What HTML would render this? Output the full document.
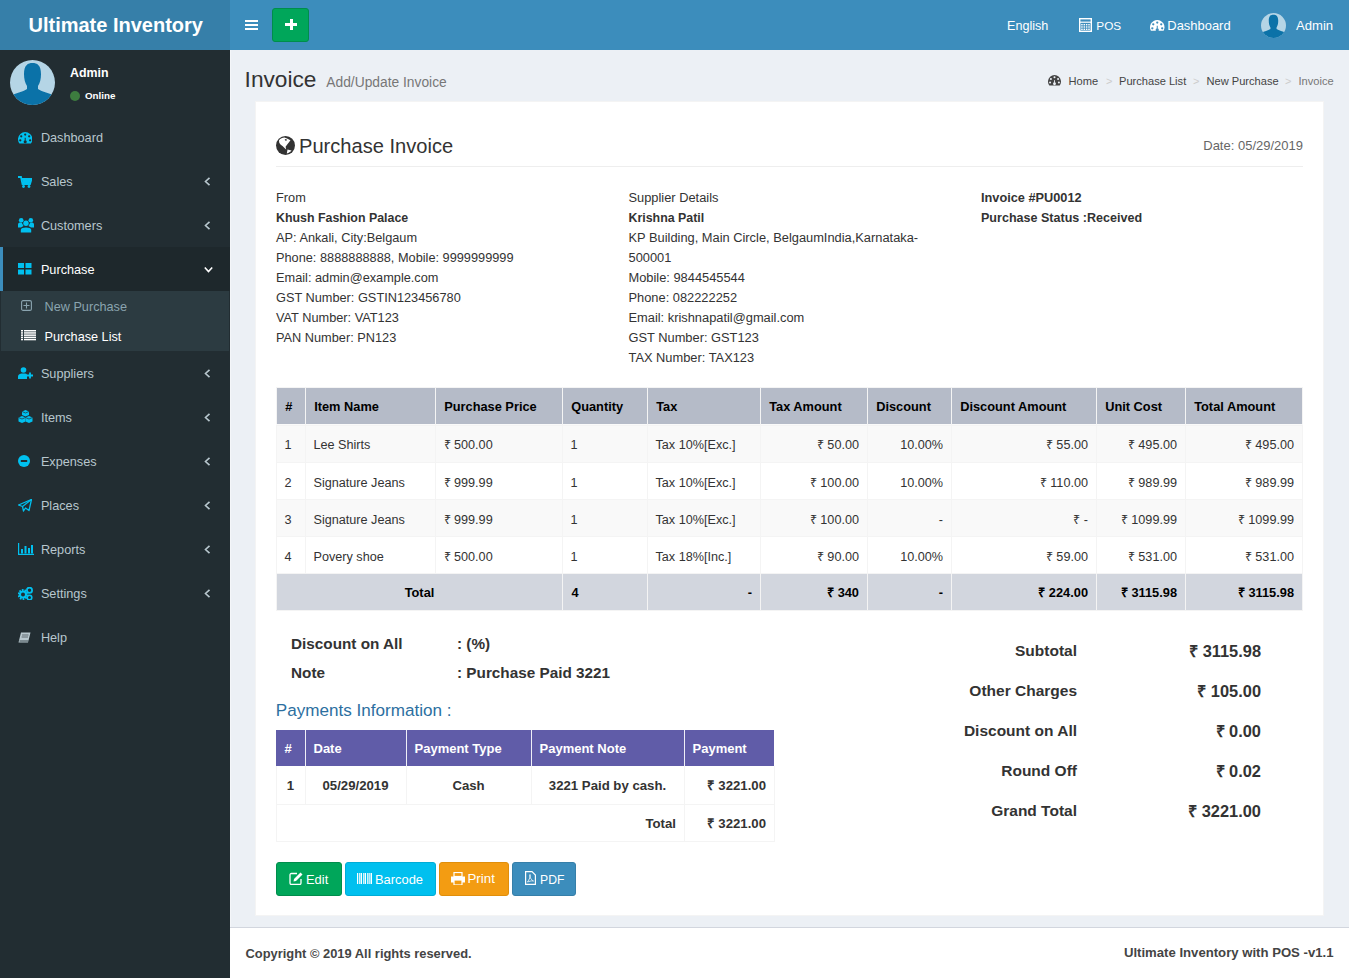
<!DOCTYPE html>
<html><head><meta charset="utf-8"><title>Invoice</title>
<style>
html,body{margin:0;padding:0;width:1349px;height:978px;overflow:hidden;background:#ecf0f5;}
body{position:relative;font-family:'Liberation Sans', sans-serif;}
.t{position:absolute;white-space:nowrap;line-height:20px;}
.r{position:absolute;}
</style></head><body>
<div class="r" style="left:0px;top:0px;width:230px;height:50px;background:#367fa9;"></div>
<div class="r" style="left:230px;top:0px;width:1119px;height:50px;background:#3c8dbc;"></div>
<div class="r" style="left:0px;top:50px;width:230px;height:928px;background:#222d32;"></div>
<div class="r" style="left:230px;top:50px;width:1119px;height:877px;background:#ecf0f5;"></div>
<div class="r" style="left:230px;top:50px;width:1px;height:877px;background:#f4f6f9;"></div>
<div class="r" style="left:230px;top:927px;width:1119px;height:1px;background:#d2d6de;"></div>
<div class="r" style="left:230px;top:928px;width:1119px;height:50px;background:#ffffff;"></div>
<div class="t" style="top:15.07px;font-size:20px;color:#fff;font-weight:bold;left:28.5px;">Ultimate Inventory</div>
<div class="r" style="left:245px;top:20px;width:13px;height:2px;background:#fff;"></div>
<div class="r" style="left:245px;top:24px;width:13px;height:2px;background:#fff;"></div>
<div class="r" style="left:245px;top:28px;width:13px;height:2px;background:#fff;"></div>
<div class="r" style="left:272px;top:8px;width:37px;height:34px;background:#00a65a;border-radius:3px;box-sizing:border-box;border:1px solid #008d4c;"></div>
<div class="r" style="left:285px;top:23px;width:12px;height:3px;background:#fff;"></div>
<div class="r" style="left:289.5px;top:19px;width:3px;height:11px;background:#fff;"></div>
<div class="t" style="top:15.63px;font-size:12.6px;color:#fff;left:1007px;">English</div>
<svg class="r" style="left:1079px;top:18px;" width="13" height="14" viewBox="0 0 13 14"><rect x="0.7" y="0.7" width="11.6" height="12.6" fill="none" stroke="#fff" stroke-width="1.4"/><rect x="0.7" y="3.6" width="11.6" height="1.2" fill="#fff"/><rect x="2.20" y="6.00" width="1.5" height="1.4" fill="#fff"/><rect x="2.20" y="8.30" width="1.5" height="1.4" fill="#fff"/><rect x="2.20" y="10.60" width="1.5" height="1.4" fill="#fff"/><rect x="4.55" y="6.00" width="1.5" height="1.4" fill="#fff"/><rect x="4.55" y="8.30" width="1.5" height="1.4" fill="#fff"/><rect x="4.55" y="10.60" width="1.5" height="1.4" fill="#fff"/><rect x="6.90" y="6.00" width="1.5" height="1.4" fill="#fff"/><rect x="6.90" y="8.30" width="1.5" height="1.4" fill="#fff"/><rect x="6.90" y="10.60" width="1.5" height="1.4" fill="#fff"/><rect x="9.25" y="6.00" width="1.5" height="1.4" fill="#fff"/><rect x="9.25" y="8.30" width="1.5" height="1.4" fill="#fff"/><rect x="9.25" y="10.60" width="1.5" height="1.4" fill="#fff"/></svg>
<div class="t" style="top:15.91px;font-size:11.8px;color:#fff;left:1096.3px;">POS</div>
<svg class="r" style="left:1150px;top:20px;" width="14.5" height="11" viewBox="0 0 14.5 11"><path d="M0.89,10.73 A7.25,7.25 0 1 1 13.61,10.73 Z" fill="#fff"/><circle cx="7.25" cy="2.54" r="1.14" fill="#3c8dbc"/><circle cx="3.26" cy="4.35" r="1.14" fill="#3c8dbc"/><circle cx="11.24" cy="4.35" r="1.14" fill="#3c8dbc"/><circle cx="2.32" cy="8.34" r="1.14" fill="#3c8dbc"/><circle cx="12.18" cy="8.34" r="1.14" fill="#3c8dbc"/><path d="M7.25,5.80 L7.25,8.70" stroke="#3c8dbc" stroke-width="1.03"/><circle cx="7.25" cy="9.79" r="1.60" fill="#3c8dbc"/></svg>
<div class="t" style="top:15.51px;font-size:12.95px;color:#fff;left:1167.3px;">Dashboard</div>
<svg class="r" style="left:1261px;top:13px;" width="25" height="25" viewBox="0 0 45 45"><defs><clipPath id="c1261"><circle cx="22.5" cy="22.5" r="22.5"/></clipPath></defs><circle cx="22.5" cy="22.5" r="22.5" fill="#b5d5e6"/><g clip-path="url(#c1261)" fill="#0b72a8"><path d="M14,14 C14,5 18,3 22.5,3 C27,3 31,5 31,14 C31,19 30,23 28,26 L28,29 C32,32 40,33 44,36 L46,46 L-1,46 L1,36 C5,33 13,32 17,29 L17,26 C15,23 14,19 14,14 Z"/></g></svg>
<div class="t" style="top:16.06px;font-size:13.1px;color:#fff;left:1296px;">Admin</div>
<svg class="r" style="left:10px;top:60px;" width="45" height="45" viewBox="0 0 45 45"><defs><clipPath id="c10"><circle cx="22.5" cy="22.5" r="22.5"/></clipPath></defs><circle cx="22.5" cy="22.5" r="22.5" fill="#b5d5e6"/><g clip-path="url(#c10)" fill="#0b72a8"><path d="M14,14 C14,5 18,3 22.5,3 C27,3 31,5 31,14 C31,19 30,23 28,26 L28,29 C32,32 40,33 44,36 L46,46 L-1,46 L1,36 C5,33 13,32 17,29 L17,26 C15,23 14,19 14,14 Z"/></g></svg>
<div class="t" style="top:62.70px;font-size:12.4px;color:#fff;font-weight:bold;left:70px;">Admin</div>
<svg class="r" style="left:70px;top:91px;" width="10" height="10" viewBox="0 0 10 10"><circle cx="5" cy="5" r="5" fill="#3d7c3f"/></svg>
<div class="t" style="top:86.40px;font-size:9.8px;color:#fff;font-weight:bold;left:85px;">Online</div>
<div class="r" style="left:0px;top:247px;width:230px;height:44px;background:#1e282c;"></div>
<div class="r" style="left:0px;top:247px;width:3px;height:44px;background:#3c8dbc;"></div>
<div class="r" style="left:1px;top:291px;width:228px;height:60px;background:#2c3b41;"></div>
<div class="t" style="top:127.60px;font-size:12.7px;color:#b8c7ce;left:40.9px;">Dashboard</div>
<div class="t" style="top:171.60px;font-size:12.7px;color:#b8c7ce;left:40.9px;">Sales</div>
<svg class="r" style="left:204px;top:177px;" width="7" height="9" viewBox="0 0 7 9"><path d="M5.5,0.8 L1.5,4.5 L5.5,8.2" fill="none" stroke="#b8c7ce" stroke-width="1.6"/></svg>
<div class="t" style="top:215.60px;font-size:12.7px;color:#b8c7ce;left:40.9px;">Customers</div>
<svg class="r" style="left:204px;top:221px;" width="7" height="9" viewBox="0 0 7 9"><path d="M5.5,0.8 L1.5,4.5 L5.5,8.2" fill="none" stroke="#b8c7ce" stroke-width="1.6"/></svg>
<div class="t" style="top:259.60px;font-size:12.7px;color:#fff;left:40.9px;">Purchase</div>
<svg class="r" style="left:204px;top:266px;" width="9" height="7" viewBox="0 0 9 7"><path d="M0.8,1.5 L4.5,5.5 L8.2,1.5" fill="none" stroke="#fff" stroke-width="1.6"/></svg>
<div class="t" style="top:363.60px;font-size:12.7px;color:#b8c7ce;left:40.9px;">Suppliers</div>
<svg class="r" style="left:204px;top:369px;" width="7" height="9" viewBox="0 0 7 9"><path d="M5.5,0.8 L1.5,4.5 L5.5,8.2" fill="none" stroke="#b8c7ce" stroke-width="1.6"/></svg>
<div class="t" style="top:407.60px;font-size:12.7px;color:#b8c7ce;left:40.9px;">Items</div>
<svg class="r" style="left:204px;top:413px;" width="7" height="9" viewBox="0 0 7 9"><path d="M5.5,0.8 L1.5,4.5 L5.5,8.2" fill="none" stroke="#b8c7ce" stroke-width="1.6"/></svg>
<div class="t" style="top:451.60px;font-size:12.7px;color:#b8c7ce;left:40.9px;">Expenses</div>
<svg class="r" style="left:204px;top:457px;" width="7" height="9" viewBox="0 0 7 9"><path d="M5.5,0.8 L1.5,4.5 L5.5,8.2" fill="none" stroke="#b8c7ce" stroke-width="1.6"/></svg>
<div class="t" style="top:495.60px;font-size:12.7px;color:#b8c7ce;left:40.9px;">Places</div>
<svg class="r" style="left:204px;top:501px;" width="7" height="9" viewBox="0 0 7 9"><path d="M5.5,0.8 L1.5,4.5 L5.5,8.2" fill="none" stroke="#b8c7ce" stroke-width="1.6"/></svg>
<div class="t" style="top:539.60px;font-size:12.7px;color:#b8c7ce;left:40.9px;">Reports</div>
<svg class="r" style="left:204px;top:545px;" width="7" height="9" viewBox="0 0 7 9"><path d="M5.5,0.8 L1.5,4.5 L5.5,8.2" fill="none" stroke="#b8c7ce" stroke-width="1.6"/></svg>
<div class="t" style="top:583.60px;font-size:12.7px;color:#b8c7ce;left:40.9px;">Settings</div>
<svg class="r" style="left:204px;top:589px;" width="7" height="9" viewBox="0 0 7 9"><path d="M5.5,0.8 L1.5,4.5 L5.5,8.2" fill="none" stroke="#b8c7ce" stroke-width="1.6"/></svg>
<div class="t" style="top:627.60px;font-size:12.7px;color:#b8c7ce;left:40.9px;">Help</div>
<svg class="r" style="left:17.6px;top:131.7px;" width="14.4" height="12" viewBox="0 0 14.4 12"><path d="M1.44,11.52 A7.20,7.20 0 1 1 12.96,11.52 Z" fill="#00c0ef"/><circle cx="7.20" cy="2.52" r="1.13" fill="#222d32"/><circle cx="3.24" cy="4.32" r="1.13" fill="#222d32"/><circle cx="11.16" cy="4.32" r="1.13" fill="#222d32"/><circle cx="2.30" cy="8.28" r="1.13" fill="#222d32"/><circle cx="12.10" cy="8.28" r="1.13" fill="#222d32"/><path d="M7.20,5.76 L7.20,8.64" stroke="#222d32" stroke-width="1.02"/><circle cx="7.20" cy="9.72" r="1.58" fill="#222d32"/></svg>
<svg class="r" style="left:18px;top:176px;" width="14" height="12" viewBox="0 0 14 12"><path d="M0,1 L3,1 L4.5,8 L12,8 L13.5,3 L3.8,3" fill="none" stroke="#00c0ef" stroke-width="1.8"/><path d="M4,3 L13,3 L11.8,7 L4.8,7 Z" fill="#00c0ef"/><circle cx="5.5" cy="10.5" r="1.4" fill="#00c0ef"/><circle cx="11" cy="10.5" r="1.4" fill="#00c0ef"/></svg>
<svg class="r" style="left:17.5px;top:217.5px;" width="16" height="15" viewBox="0 0 16 15"><circle cx="3.2" cy="2.3" r="2.3" fill="#00c0ef"/><circle cx="12.8" cy="2.3" r="2.3" fill="#00c0ef"/><circle cx="8" cy="5.3" r="2.7" fill="#00c0ef"/><path d="M0,9.5 V6.5 C0,4.5 2,4.2 3.5,4.5 C4.5,6 5,7 5.5,8 L3,9.5 Z" fill="#00c0ef"/><path d="M16,9.5 V6.5 C16,4.5 14,4.2 12.5,4.5 C11.5,6 11,7 10.5,8 L13,9.5 Z" fill="#00c0ef"/><path d="M2.8,14.5 V11.8 C2.8,8.6 13.2,8.6 13.2,11.8 V14.5 Z" fill="#00c0ef"/></svg>
<svg class="r" style="left:18px;top:263px;" width="14" height="12" viewBox="0 0 14 12"><rect x="0" y="0" width="6" height="5" fill="#00c0ef"/><rect x="7.5" y="0" width="6" height="5" fill="#00c0ef"/><rect x="0" y="6.5" width="6" height="5" fill="#00c0ef"/><rect x="7.5" y="6.5" width="6" height="5" fill="#00c0ef"/></svg>
<svg class="r" style="left:21px;top:300px;" width="11" height="11" viewBox="0 0 11 11"><rect x="0.6" y="0.6" width="9.8" height="9.8" rx="1.5" fill="none" stroke="#8aa4af" stroke-width="1.1"/><path d="M5.5,2.5 V8.5 M2.5,5.5 H8.5" stroke="#8aa4af" stroke-width="1.1"/></svg>
<div class="t" style="top:296.60px;font-size:12.7px;color:#8aa4af;left:44.5px;">New Purchase</div>
<svg class="r" style="left:21px;top:330px;" width="15" height="11" viewBox="0 0 15 11"><rect x="0" y="0.0" width="2" height="1.5" fill="#fff"/><rect x="3" y="0.0" width="12" height="1.5" fill="#fff"/><rect x="0" y="2.2" width="2" height="1.5" fill="#fff"/><rect x="3" y="2.2" width="12" height="1.5" fill="#fff"/><rect x="0" y="4.4" width="2" height="1.5" fill="#fff"/><rect x="3" y="4.4" width="12" height="1.5" fill="#fff"/><rect x="0" y="6.6" width="2" height="1.5" fill="#fff"/><rect x="3" y="6.6" width="12" height="1.5" fill="#fff"/><rect x="0" y="8.8" width="2" height="1.5" fill="#fff"/><rect x="3" y="8.8" width="12" height="1.5" fill="#fff"/></svg>
<div class="t" style="top:326.60px;font-size:12.7px;color:#fff;left:44.5px;">Purchase List</div>
<svg class="r" style="left:18px;top:367px;" width="15" height="12" viewBox="0 0 15 12"><circle cx="5.5" cy="3" r="2.8" fill="#00c0ef"/><path d="M0,12 L0,9.5 C0,7 3,6.5 5.5,6.5 C8,6.5 9,7 9,7.5 L9,12 Z" fill="#00c0ef"/><path d="M12,5.5 V11.5 M9,8.5 H15" stroke="#00c0ef" stroke-width="1.8"/></svg>
<svg class="r" style="left:18px;top:410px;" width="15" height="13" viewBox="0 0 15 13"><path d="M7.5,0 L11,1.5 L11,5 L7.5,6.5 L4,5 L4,1.5 Z" fill="#00c0ef"/><path d="M4,6 L7.5,7.5 L7.5,11.5 L4,13 L0.5,11.5 L0.5,7.5 Z" fill="#00c0ef"/><path d="M11,6 L14.5,7.5 L14.5,11.5 L11,13 L7.5,11.5 L7.5,7.5 Z" fill="#00c0ef"/><path d="M4,1.5 L7.5,3 L11,1.5 M0.5,7.5 L4,9 L7.5,7.5 L11,9 L14.5,7.5" stroke="#222d32" stroke-width="0.7" fill="none"/></svg>
<svg class="r" style="left:18px;top:455px;" width="12" height="12" viewBox="0 0 12 12"><circle cx="6" cy="6" r="6" fill="#00c0ef"/><rect x="2.8" y="5" width="6.4" height="2" fill="#222d32"/></svg>
<svg class="r" style="left:18px;top:499px;" width="14" height="13" viewBox="0 0 14 13"><path d="M13.5,0.5 L0.5,6 L4.5,7.5 L5.5,12 L7.5,9 L11,11.5 Z" fill="none" stroke="#00c0ef" stroke-width="1.3" stroke-linejoin="round"/><path d="M4.5,7.5 L13.5,0.5" stroke="#00c0ef" stroke-width="1.1"/></svg>
<svg class="r" style="left:18px;top:543px;" width="16" height="12" viewBox="0 0 16 12"><path d="M0.6,0 V11.4 H16" fill="none" stroke="#00c0ef" stroke-width="1.2"/><rect x="3" y="6" width="2" height="4.5" fill="#00c0ef"/><rect x="6.5" y="3" width="2" height="7.5" fill="#00c0ef"/><rect x="10" y="5" width="2" height="5.5" fill="#00c0ef"/><rect x="13" y="2" width="2" height="8.5" fill="#00c0ef"/></svg>
<svg class="r" style="left:18px;top:587px;" width="15" height="13" viewBox="0 0 15 13"><circle cx="5" cy="7.5" r="4.2" fill="none" stroke="#00c0ef" stroke-width="2.6" stroke-dasharray="1.6 1"/><circle cx="5" cy="7.5" r="3" fill="none" stroke="#00c0ef" stroke-width="2"/><circle cx="11.5" cy="3.2" r="2.6" fill="none" stroke="#00c0ef" stroke-width="1.8"/><circle cx="11.5" cy="10.5" r="2.3" fill="none" stroke="#00c0ef" stroke-width="1.6"/></svg>
<svg class="r" style="left:18px;top:632px;" width="13" height="11" viewBox="0 0 13 11"><path d="M3,0.5 L12.5,0.5 L10,10.5 L0.5,10.5 Z" fill="#b8c7ce"/><path d="M1.5,9 L10.5,9" stroke="#222d32" stroke-width="0.8"/><path d="M4,3 L10.5,3 M3.6,5 L10,5" stroke="#222d32" stroke-width="0.6"/></svg>
<div class="t" style="top:69.13px;font-size:22.7px;color:#333;left:244.6px;">Invoice</div>
<div class="t" style="top:72.72px;font-size:13.8px;color:#777;left:326.3px;">Add/Update Invoice</div>
<svg class="r" style="left:1048px;top:75px;" width="13" height="11" viewBox="0 0 13 11"><path d="M1.30,10.40 A6.50,6.50 0 1 1 11.70,10.40 Z" fill="#444"/><circle cx="6.50" cy="2.27" r="1.02" fill="#ecf0f5"/><circle cx="2.92" cy="3.90" r="1.02" fill="#ecf0f5"/><circle cx="10.07" cy="3.90" r="1.02" fill="#ecf0f5"/><circle cx="2.08" cy="7.47" r="1.02" fill="#ecf0f5"/><circle cx="10.92" cy="7.47" r="1.02" fill="#ecf0f5"/><path d="M6.50,5.20 L6.50,7.80" stroke="#ecf0f5" stroke-width="0.92"/><circle cx="6.50" cy="8.78" r="1.43" fill="#ecf0f5"/></svg>
<div class="t" style="top:70.95px;font-size:11.1px;color:#444;left:1068.5px;">Home</div>
<div class="t" style="top:70.99px;font-size:11px;color:#ccc;left:1106px;">&gt;</div>
<div class="t" style="top:70.95px;font-size:11.1px;color:#444;left:1119px;">Purchase List</div>
<div class="t" style="top:70.99px;font-size:11px;color:#ccc;left:1193px;">&gt;</div>
<div class="t" style="top:70.95px;font-size:11.1px;color:#444;left:1206.5px;">New Purchase</div>
<div class="t" style="top:70.99px;font-size:11px;color:#ccc;left:1285px;">&gt;</div>
<div class="t" style="top:70.95px;font-size:11.1px;color:#777;left:1298.5px;">Invoice</div>
<div class="r" style="left:255px;top:101px;width:1069px;height:815px;background:#fff;box-sizing:border-box;border:1px solid #f4f4f4;"></div>
<svg class="r" style="left:276px;top:136px;" width="19" height="19" viewBox="0 0 19 19"><circle cx="9.5" cy="9.5" r="9.5" fill="#333"/><path d="M3,4.2 C4.5,2.5 6.5,1.7 8.5,1.6 L11,2.4 L14.5,4.2 L12.8,6.5 L11,8.8 L9.6,10.8 L10.2,13.4 L8.8,12.2 L6.5,10 C5,9 3.8,8 3.2,6.5 Z" fill="#fff"/><path d="M8.8,3 L11,3.6 L10.2,5 L9,4.2 Z" fill="#333"/><path d="M10.8,17.4 L11.5,13.6 L15.5,14.6 C14.5,16 12.8,17 10.8,17.4 Z" fill="#fff"/></svg>
<div class="t" style="top:135.74px;font-size:20.1px;color:#333;left:299px;">Purchase Invoice</div>
<div class="t" style="top:136.00px;font-size:13.0px;color:#666;right:46px;text-align:right;">Date: 05/29/2019</div>
<div class="r" style="left:276px;top:166px;width:1027px;height:1px;background:#eee;"></div>
<div class="t" style="top:187.58px;font-size:12.75px;color:#333;left:276px;">From</div>
<div class="t" style="top:207.70px;font-size:12.4px;color:#333;font-weight:bold;left:276px;">Khush Fashion Palace</div>
<div class="t" style="top:227.58px;font-size:12.75px;color:#333;left:276px;">AP: Ankali, City:Belgaum</div>
<div class="t" style="top:247.58px;font-size:12.75px;color:#333;left:276px;">Phone: 8888888888, Mobile: 9999999999</div>
<div class="t" style="top:267.58px;font-size:12.75px;color:#333;left:276px;">Email: admin@example.com</div>
<div class="t" style="top:287.58px;font-size:12.75px;color:#333;left:276px;">GST Number: GSTIN123456780</div>
<div class="t" style="top:307.58px;font-size:12.75px;color:#333;left:276px;">VAT Number: VAT123</div>
<div class="t" style="top:327.58px;font-size:12.75px;color:#333;left:276px;">PAN Number: PN123</div>
<div class="t" style="top:187.55px;font-size:12.85px;color:#333;left:628.5px;">Supplier Details</div>
<div class="t" style="top:207.70px;font-size:12.4px;color:#333;font-weight:bold;left:628.5px;">Krishna Patil</div>
<div class="t" style="top:227.55px;font-size:12.85px;color:#333;left:628.5px;">KP Building, Main Circle, BelgaumIndia,Karnataka-</div>
<div class="t" style="top:247.55px;font-size:12.85px;color:#333;left:628.5px;">500001</div>
<div class="t" style="top:267.55px;font-size:12.85px;color:#333;left:628.5px;">Mobile: 9844545544</div>
<div class="t" style="top:287.55px;font-size:12.85px;color:#333;left:628.5px;">Phone: 082222252</div>
<div class="t" style="top:307.55px;font-size:12.85px;color:#333;left:628.5px;">Email: krishnapatil@gmail.com</div>
<div class="t" style="top:327.55px;font-size:12.85px;color:#333;left:628.5px;">GST Number: GST123</div>
<div class="t" style="top:347.55px;font-size:12.85px;color:#333;left:628.5px;">TAX Number: TAX123</div>
<div class="t" style="top:187.58px;font-size:12.75px;color:#333;font-weight:bold;left:981px;">Invoice #PU0012</div>
<div class="t" style="top:207.65px;font-size:12.55px;color:#333;font-weight:bold;left:981px;">Purchase Status :Received</div>
<div class="r" style="left:276px;top:387px;width:1027px;height:37px;background:#b5bbc8;"></div>
<div class="r" style="left:276px;top:573px;width:1027px;height:38px;background:#d2d6de;"></div>
<div class="r" style="left:276px;top:424px;width:1027px;height:38px;background:#f9f9f9;"></div>
<div class="r" style="left:276px;top:462px;width:1027px;height:37px;background:#fff;"></div>
<div class="r" style="left:276px;top:499px;width:1027px;height:37px;background:#f9f9f9;"></div>
<div class="r" style="left:276px;top:536px;width:1027px;height:37px;background:#fff;"></div>
<div class="r" style="left:276px;top:387px;width:1027px;height:1px;background:#f4f4f4;"></div>
<div class="r" style="left:276px;top:610px;width:1027px;height:1px;background:#f4f4f4;"></div>
<div class="r" style="left:276px;top:387px;width:1px;height:224px;background:#f4f4f4;"></div>
<div class="r" style="left:1302px;top:387px;width:1px;height:224px;background:#f4f4f4;"></div>
<div class="r" style="left:276px;top:424px;width:1027px;height:1px;background:#fafafa;"></div>
<div class="r" style="left:276px;top:425px;width:1027px;height:1px;background:#f4f4f4;"></div>
<div class="r" style="left:276px;top:462px;width:1027px;height:1px;background:#f4f4f4;"></div>
<div class="r" style="left:276px;top:499px;width:1027px;height:1px;background:#f4f4f4;"></div>
<div class="r" style="left:276px;top:536px;width:1027px;height:1px;background:#f4f4f4;"></div>
<div class="r" style="left:276px;top:573px;width:1027px;height:1px;background:#f4f4f4;"></div>
<div class="r" style="left:305px;top:387px;width:1px;height:186px;background:#f4f4f4;"></div>
<div class="r" style="left:435px;top:387px;width:1px;height:186px;background:#f4f4f4;"></div>
<div class="r" style="left:562px;top:387px;width:1px;height:224px;background:#f4f4f4;"></div>
<div class="r" style="left:647px;top:387px;width:1px;height:224px;background:#f4f4f4;"></div>
<div class="r" style="left:760px;top:387px;width:1px;height:224px;background:#f4f4f4;"></div>
<div class="r" style="left:867px;top:387px;width:1px;height:224px;background:#f4f4f4;"></div>
<div class="r" style="left:951px;top:387px;width:1px;height:224px;background:#f4f4f4;"></div>
<div class="r" style="left:1096px;top:387px;width:1px;height:224px;background:#f4f4f4;"></div>
<div class="r" style="left:1185px;top:387px;width:1px;height:224px;background:#f4f4f4;"></div>
<div class="t" style="top:396.56px;font-size:12.8px;color:#000;font-weight:bold;left:285.2px;">#</div>
<div class="t" style="top:396.56px;font-size:12.8px;color:#000;font-weight:bold;left:314.2px;">Item Name</div>
<div class="t" style="top:396.56px;font-size:12.8px;color:#000;font-weight:bold;left:444.2px;">Purchase Price</div>
<div class="t" style="top:396.56px;font-size:12.8px;color:#000;font-weight:bold;left:571.2px;">Quantity</div>
<div class="t" style="top:396.56px;font-size:12.8px;color:#000;font-weight:bold;left:656.2px;">Tax</div>
<div class="t" style="top:396.56px;font-size:12.8px;color:#000;font-weight:bold;left:769.2px;">Tax Amount</div>
<div class="t" style="top:396.56px;font-size:12.8px;color:#000;font-weight:bold;left:876.2px;">Discount</div>
<div class="t" style="top:396.56px;font-size:12.8px;color:#000;font-weight:bold;left:960.2px;">Discount Amount</div>
<div class="t" style="top:396.56px;font-size:12.8px;color:#000;font-weight:bold;left:1105.2px;">Unit Cost</div>
<div class="t" style="top:396.56px;font-size:12.8px;color:#000;font-weight:bold;left:1194.2px;">Total Amount</div>
<div class="t" style="top:434.62px;font-size:12.65px;color:#333;left:284.5px;">1</div>
<div class="t" style="top:434.62px;font-size:12.65px;color:#333;left:313.5px;">Lee Shirts</div>
<div class="t" style="top:434.62px;font-size:12.65px;color:#333;left:443.5px;">₹ 500.00</div>
<div class="t" style="top:434.62px;font-size:12.65px;color:#333;left:570.5px;">1</div>
<div class="t" style="top:434.62px;font-size:12.65px;color:#333;left:655.5px;">Tax 10%[Exc.]</div>
<div class="t" style="top:434.62px;font-size:12.65px;color:#333;right:490px;text-align:right;">₹ 50.00</div>
<div class="t" style="top:434.62px;font-size:12.65px;color:#333;right:406px;text-align:right;">10.00%</div>
<div class="t" style="top:434.62px;font-size:12.65px;color:#333;right:261px;text-align:right;">₹ 55.00</div>
<div class="t" style="top:434.62px;font-size:12.65px;color:#333;right:172px;text-align:right;">₹ 495.00</div>
<div class="t" style="top:434.62px;font-size:12.65px;color:#333;right:55px;text-align:right;">₹ 495.00</div>
<div class="t" style="top:472.62px;font-size:12.65px;color:#333;left:284.5px;">2</div>
<div class="t" style="top:472.62px;font-size:12.65px;color:#333;left:313.5px;">Signature Jeans</div>
<div class="t" style="top:472.62px;font-size:12.65px;color:#333;left:443.5px;">₹ 999.99</div>
<div class="t" style="top:472.62px;font-size:12.65px;color:#333;left:570.5px;">1</div>
<div class="t" style="top:472.62px;font-size:12.65px;color:#333;left:655.5px;">Tax 10%[Exc.]</div>
<div class="t" style="top:472.62px;font-size:12.65px;color:#333;right:490px;text-align:right;">₹ 100.00</div>
<div class="t" style="top:472.62px;font-size:12.65px;color:#333;right:406px;text-align:right;">10.00%</div>
<div class="t" style="top:472.62px;font-size:12.65px;color:#333;right:261px;text-align:right;">₹ 110.00</div>
<div class="t" style="top:472.62px;font-size:12.65px;color:#333;right:172px;text-align:right;">₹ 989.99</div>
<div class="t" style="top:472.62px;font-size:12.65px;color:#333;right:55px;text-align:right;">₹ 989.99</div>
<div class="t" style="top:509.62px;font-size:12.65px;color:#333;left:284.5px;">3</div>
<div class="t" style="top:509.62px;font-size:12.65px;color:#333;left:313.5px;">Signature Jeans</div>
<div class="t" style="top:509.62px;font-size:12.65px;color:#333;left:443.5px;">₹ 999.99</div>
<div class="t" style="top:509.62px;font-size:12.65px;color:#333;left:570.5px;">1</div>
<div class="t" style="top:509.62px;font-size:12.65px;color:#333;left:655.5px;">Tax 10%[Exc.]</div>
<div class="t" style="top:509.62px;font-size:12.65px;color:#333;right:490px;text-align:right;">₹ 100.00</div>
<div class="t" style="top:509.62px;font-size:12.65px;color:#333;right:406px;text-align:right;">-</div>
<div class="t" style="top:509.62px;font-size:12.65px;color:#333;right:261px;text-align:right;">₹ -</div>
<div class="t" style="top:509.62px;font-size:12.65px;color:#333;right:172px;text-align:right;">₹ 1099.99</div>
<div class="t" style="top:509.62px;font-size:12.65px;color:#333;right:55px;text-align:right;">₹ 1099.99</div>
<div class="t" style="top:546.62px;font-size:12.65px;color:#333;left:284.5px;">4</div>
<div class="t" style="top:546.62px;font-size:12.65px;color:#333;left:313.5px;">Povery shoe</div>
<div class="t" style="top:546.62px;font-size:12.65px;color:#333;left:443.5px;">₹ 500.00</div>
<div class="t" style="top:546.62px;font-size:12.65px;color:#333;left:570.5px;">1</div>
<div class="t" style="top:546.62px;font-size:12.65px;color:#333;left:655.5px;">Tax 18%[Inc.]</div>
<div class="t" style="top:546.62px;font-size:12.65px;color:#333;right:490px;text-align:right;">₹ 90.00</div>
<div class="t" style="top:546.62px;font-size:12.65px;color:#333;right:406px;text-align:right;">10.00%</div>
<div class="t" style="top:546.62px;font-size:12.65px;color:#333;right:261px;text-align:right;">₹ 59.00</div>
<div class="t" style="top:546.62px;font-size:12.65px;color:#333;right:172px;text-align:right;">₹ 531.00</div>
<div class="t" style="top:546.62px;font-size:12.65px;color:#333;right:55px;text-align:right;">₹ 531.00</div>
<div class="t" style="top:582.56px;font-size:12.8px;color:#000;font-weight:bold;left:119.5px;width:600px;text-align:center;">Total</div>
<div class="t" style="top:582.56px;font-size:12.8px;color:#000;font-weight:bold;left:571.5px;">4</div>
<div class="t" style="top:582.56px;font-size:12.8px;color:#000;font-weight:bold;right:597px;text-align:right;">-</div>
<div class="t" style="top:582.56px;font-size:12.8px;color:#000;font-weight:bold;right:490px;text-align:right;">₹ 340</div>
<div class="t" style="top:582.56px;font-size:12.8px;color:#000;font-weight:bold;right:406px;text-align:right;">-</div>
<div class="t" style="top:582.56px;font-size:12.8px;color:#000;font-weight:bold;right:261px;text-align:right;">₹ 224.00</div>
<div class="t" style="top:582.56px;font-size:12.8px;color:#000;font-weight:bold;right:172px;text-align:right;">₹ 3115.98</div>
<div class="t" style="top:582.56px;font-size:12.8px;color:#000;font-weight:bold;right:55px;text-align:right;">₹ 3115.98</div>
<div class="t" style="top:633.70px;font-size:15.3px;color:#333;font-weight:bold;left:291px;">Discount on All</div>
<div class="t" style="top:633.70px;font-size:15.3px;color:#333;font-weight:bold;left:457px;">: (%)</div>
<div class="t" style="top:662.70px;font-size:15.3px;color:#333;font-weight:bold;left:291px;">Note</div>
<div class="t" style="top:662.70px;font-size:15.3px;color:#333;font-weight:bold;left:457px;">: Purchase Paid 3221</div>
<div class="t" style="top:701.07px;font-size:17.1px;color:#2c6f9f;left:275.8px;">Payments Information :</div>
<div class="r" style="left:276px;top:730px;width:498px;height:36px;background:#605ca8;"></div>
<div class="r" style="left:305px;top:730px;width:1px;height:36px;background:#fff;opacity:0.9"></div>
<div class="r" style="left:406px;top:730px;width:1px;height:36px;background:#fff;opacity:0.9"></div>
<div class="r" style="left:531px;top:730px;width:1px;height:36px;background:#fff;opacity:0.9"></div>
<div class="r" style="left:684px;top:730px;width:1px;height:36px;background:#fff;opacity:0.9"></div>
<div class="r" style="left:276px;top:766px;width:499px;height:76px;background:#fff;"></div>
<div class="r" style="left:276px;top:766px;width:1px;height:76px;background:#f4f4f4;"></div>
<div class="r" style="left:774px;top:766px;width:1px;height:76px;background:#f4f4f4;"></div>
<div class="r" style="left:276px;top:841px;width:499px;height:1px;background:#f4f4f4;"></div>
<div class="r" style="left:276px;top:804px;width:499px;height:1px;background:#f4f4f4;"></div>
<div class="r" style="left:305px;top:766px;width:1px;height:38px;background:#f4f4f4;"></div>
<div class="r" style="left:406px;top:766px;width:1px;height:38px;background:#f4f4f4;"></div>
<div class="r" style="left:531px;top:766px;width:1px;height:38px;background:#f4f4f4;"></div>
<div class="r" style="left:684px;top:766px;width:1px;height:38px;background:#f4f4f4;"></div>
<div class="r" style="left:684px;top:804px;width:1px;height:38px;background:#f4f4f4;"></div>
<div class="t" style="top:738.50px;font-size:13.0px;color:#fff;font-weight:bold;left:284.5px;">#</div>
<div class="t" style="top:738.50px;font-size:13.0px;color:#fff;font-weight:bold;left:313.5px;">Date</div>
<div class="t" style="top:738.50px;font-size:13.0px;color:#fff;font-weight:bold;left:414.5px;">Payment Type</div>
<div class="t" style="top:738.50px;font-size:13.0px;color:#fff;font-weight:bold;left:539.5px;">Payment Note</div>
<div class="t" style="top:738.50px;font-size:13.0px;color:#fff;font-weight:bold;left:692.5px;">Payment</div>
<div class="t" style="top:776.43px;font-size:13.2px;color:#333;font-weight:bold;left:-9.5px;width:600px;text-align:center;">1</div>
<div class="t" style="top:776.43px;font-size:13.2px;color:#333;font-weight:bold;left:55.5px;width:600px;text-align:center;">05/29/2019</div>
<div class="t" style="top:776.43px;font-size:13.2px;color:#333;font-weight:bold;left:168.5px;width:600px;text-align:center;">Cash</div>
<div class="t" style="top:776.43px;font-size:13.2px;color:#333;font-weight:bold;left:307.5px;width:600px;text-align:center;">3221 Paid by cash.</div>
<div class="t" style="top:776.43px;font-size:13.2px;color:#333;font-weight:bold;right:583px;text-align:right;">₹ 3221.00</div>
<div class="t" style="top:814.43px;font-size:13.2px;color:#333;font-weight:bold;right:673px;text-align:right;">Total</div>
<div class="t" style="top:814.43px;font-size:13.2px;color:#333;font-weight:bold;right:583px;text-align:right;">₹ 3221.00</div>
<div class="r" style="left:276px;top:862px;width:66px;height:34px;background:#00a65a;box-sizing:border-box;border:1px solid #008d4c;border-radius:3px;"></div>
<div class="r" style="left:345px;top:862px;width:91px;height:34px;background:#00c0ef;box-sizing:border-box;border:1px solid #00acd6;border-radius:3px;"></div>
<div class="r" style="left:439px;top:862px;width:70px;height:34px;background:#f39c12;box-sizing:border-box;border:1px solid #e08e0b;border-radius:3px;"></div>
<div class="r" style="left:512px;top:862px;width:64px;height:34px;background:#3c8dbc;box-sizing:border-box;border:1px solid #367fa9;border-radius:3px;"></div>
<div class="t" style="top:869.53px;font-size:12.9px;color:#fff;left:306px;">Edit</div>
<div class="t" style="top:869.53px;font-size:12.9px;color:#fff;left:375px;">Barcode</div>
<div class="t" style="top:869.39px;font-size:13.3px;color:#fff;left:467.5px;">Print</div>
<div class="t" style="top:869.77px;font-size:12.2px;color:#fff;left:540px;">PDF</div>
<svg class="r" style="left:289px;top:872px;" width="14" height="13" viewBox="0 0 14 13"><path d="M8,1.5 H2.5 C1.5,1.5 1,2 1,3 V11 C1,12 1.5,12.5 2.5,12.5 H10.5 C11.5,12.5 12,12 12,11 V7" fill="none" stroke="#fff" stroke-width="1.3"/><path d="M11.5,0.5 L13.5,2.5 L7,9 L4.5,9.5 L5,7 Z" fill="#fff"/></svg>
<svg class="r" style="left:357px;top:873px;" width="15" height="11" viewBox="0 0 15 11"><rect x="0" y="0" width="1.2" height="11" fill="#fff"/><rect x="2" y="0" width="0.8" height="11" fill="#fff"/><rect x="3.5" y="0" width="1.5" height="11" fill="#fff"/><rect x="6" y="0" width="0.8" height="11" fill="#fff"/><rect x="7.5" y="0" width="1.5" height="11" fill="#fff"/><rect x="10" y="0" width="0.8" height="11" fill="#fff"/><rect x="11.5" y="0" width="1.2" height="11" fill="#fff"/><rect x="13.5" y="0" width="1.5" height="11" fill="#fff"/></svg>
<svg class="r" style="left:451px;top:872px;" width="14" height="13" viewBox="0 0 14 13"><rect x="3" y="0.5" width="8" height="4" fill="none" stroke="#fff" stroke-width="1.2"/><path d="M0,4.5 H14 V10.5 H0 Z" fill="#fff"/><rect x="3" y="8" width="8" height="5" fill="#f39c12" stroke="#fff" stroke-width="1.2"/></svg>
<svg class="r" style="left:525px;top:871px;" width="11" height="14" viewBox="0 0 11 14"><path d="M0.6,0.6 H7 L10.4,4 V13.4 H0.6 Z" fill="none" stroke="#fff" stroke-width="1.2"/><path d="M2.5,11 C4,9 6,5 5,3.5 C4,5 6,9 8.5,10 C6,9.5 4,10.5 2.5,11 Z" fill="none" stroke="#fff" stroke-width="0.8"/></svg>
<div class="t" style="top:640.63px;font-size:15.5px;color:#333;font-weight:bold;right:272px;text-align:right;">Subtotal</div>
<div class="t" style="top:641.32px;font-size:16.4px;color:#333;font-weight:bold;right:88px;text-align:right;">₹ 3115.98</div>
<div class="t" style="top:680.63px;font-size:15.5px;color:#333;font-weight:bold;right:272px;text-align:right;">Other Charges</div>
<div class="t" style="top:681.32px;font-size:16.4px;color:#333;font-weight:bold;right:88px;text-align:right;">₹ 105.00</div>
<div class="t" style="top:720.63px;font-size:15.5px;color:#333;font-weight:bold;right:272px;text-align:right;">Discount on All</div>
<div class="t" style="top:721.32px;font-size:16.4px;color:#333;font-weight:bold;right:88px;text-align:right;">₹ 0.00</div>
<div class="t" style="top:760.63px;font-size:15.5px;color:#333;font-weight:bold;right:272px;text-align:right;">Round Off</div>
<div class="t" style="top:761.32px;font-size:16.4px;color:#333;font-weight:bold;right:88px;text-align:right;">₹ 0.02</div>
<div class="t" style="top:800.63px;font-size:15.5px;color:#333;font-weight:bold;right:272px;text-align:right;">Grand Total</div>
<div class="t" style="top:801.32px;font-size:16.4px;color:#333;font-weight:bold;right:88px;text-align:right;">₹ 3221.00</div>
<div class="t" style="top:943.53px;font-size:12.9px;color:#444;font-weight:bold;left:245.5px;">Copyright © 2019 All rights reserved.</div>
<div class="t" style="top:943.44px;font-size:13.15px;color:#444;font-weight:bold;right:15.5px;text-align:right;">Ultimate Inventory with POS -v1.1</div>
</body></html>
